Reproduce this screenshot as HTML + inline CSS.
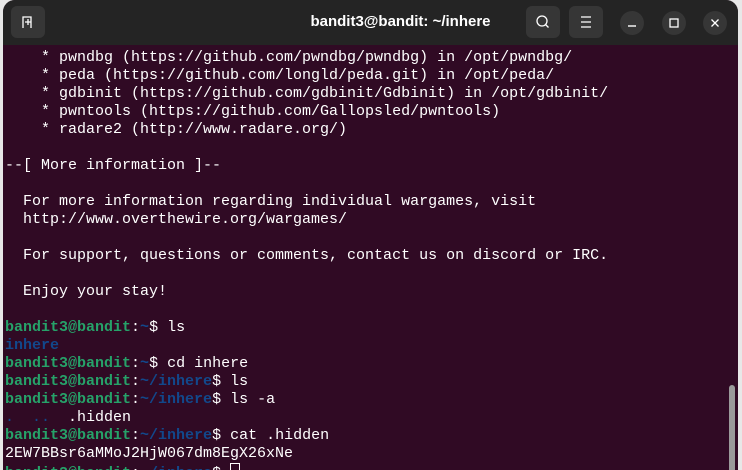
<!DOCTYPE html>
<html><head><style>
body{margin:0;width:742px;height:470px;overflow:hidden;background:#e8e8e8;position:relative}
.win{position:absolute;left:3px;top:0;width:735px;height:470px;background:#300a24;border-radius:12px 12px 0 0;overflow:hidden}
.tb{position:absolute;left:0;top:0;right:0;height:45px;background:#242424;color:#fff;font:bold 15px "Liberation Sans",sans-serif}
.title{position:absolute;left:0;right:0;top:13px;text-align:center;padding-left:60px}
.btn{position:absolute;top:6px;width:34px;height:32px;background:#363636;border-radius:6px}
.cb{position:absolute;top:11px;width:24px;height:24px;background:#363636;border-radius:50%}
pre{position:absolute;left:2px;top:49px;margin:0;font:15px/18px "Liberation Mono",monospace;color:#fff}
.g{color:#26a269;font-weight:bold}.b{color:#12488b;font-weight:bold}.bl{color:#12488b}
.sb{position:absolute;left:726px;top:385px;width:6px;height:85px;background:#9a9a9a;border-radius:3px 3px 0 0}
.cur{display:inline-block;width:8px;height:15px;border:1px solid #fff;vertical-align:-3px}
</style></head><body>
<div class="win">
<div class="tb">
<div class="btn" style="left:8px"><svg width="34" height="32"><path d="M12 22V11h8v11M14 16h6M17 13v6" stroke="#fff" fill="none" stroke-width="1.3"/></svg></div>
<div class="title">bandit3@bandit: ~/inhere</div>
<div class="btn" style="left:523px"><svg width="34" height="32"><circle cx="16" cy="15" r="5" stroke="#fff" fill="none" stroke-width="1.3"/><path d="M19.5 18.5l3 3" stroke="#fff" stroke-width="1.3"/></svg></div>
<div class="btn" style="left:566px"><svg width="34" height="32"><path d="M12 11h10M12 16h10M12 21h10" stroke="#fff" stroke-width="1.3"/></svg></div>
<div class="cb" style="left:617px"><svg width="24" height="24"><path d="M8 15h8" stroke="#fff" stroke-width="1.4"/></svg></div>
<div class="cb" style="left:659px"><svg width="24" height="24"><rect x="8" y="8" width="8" height="8" stroke="#fff" fill="none" stroke-width="1.3"/></svg></div>
<div class="cb" style="left:700px"><svg width="24" height="24"><path d="M8.5 8.5l7 7M15.5 8.5l-7 7" stroke="#fff" stroke-width="1.3"/></svg></div>
</div>
<pre>    * pwndbg (https://github.com/pwndbg/pwndbg) in /opt/pwndbg/
    * peda (https://github.com/longld/peda.git) in /opt/peda/
    * gdbinit (https://github.com/gdbinit/Gdbinit) in /opt/gdbinit/
    * pwntools (https://github.com/Gallopsled/pwntools)
    * radare2 (http://www.radare.org/)

--[ More information ]--

  For more information regarding individual wargames, visit
  http://www.overthewire.org/wargames/

  For support, questions or comments, contact us on discord or IRC.

  Enjoy your stay!

<span class="g">bandit3@bandit</span>:<span class="b">~</span>$ ls
<span class="b">inhere</span>
<span class="g">bandit3@bandit</span>:<span class="b">~</span>$ cd inhere
<span class="g">bandit3@bandit</span>:<span class="b">~/inhere</span>$ ls
<span class="g">bandit3@bandit</span>:<span class="b">~/inhere</span>$ ls -a
<span class="bl">.  ..</span>  .hidden
<span class="g">bandit3@bandit</span>:<span class="b">~/inhere</span>$ cat .hidden
2EW7BBsr6aMMoJ2HjW067dm8EgX26xNe
<span class="g">bandit3@bandit</span>:<span class="b">~/inhere</span>$ <span class="cur"></span></pre>
<div class="sb"></div>
</div>
</body></html>
